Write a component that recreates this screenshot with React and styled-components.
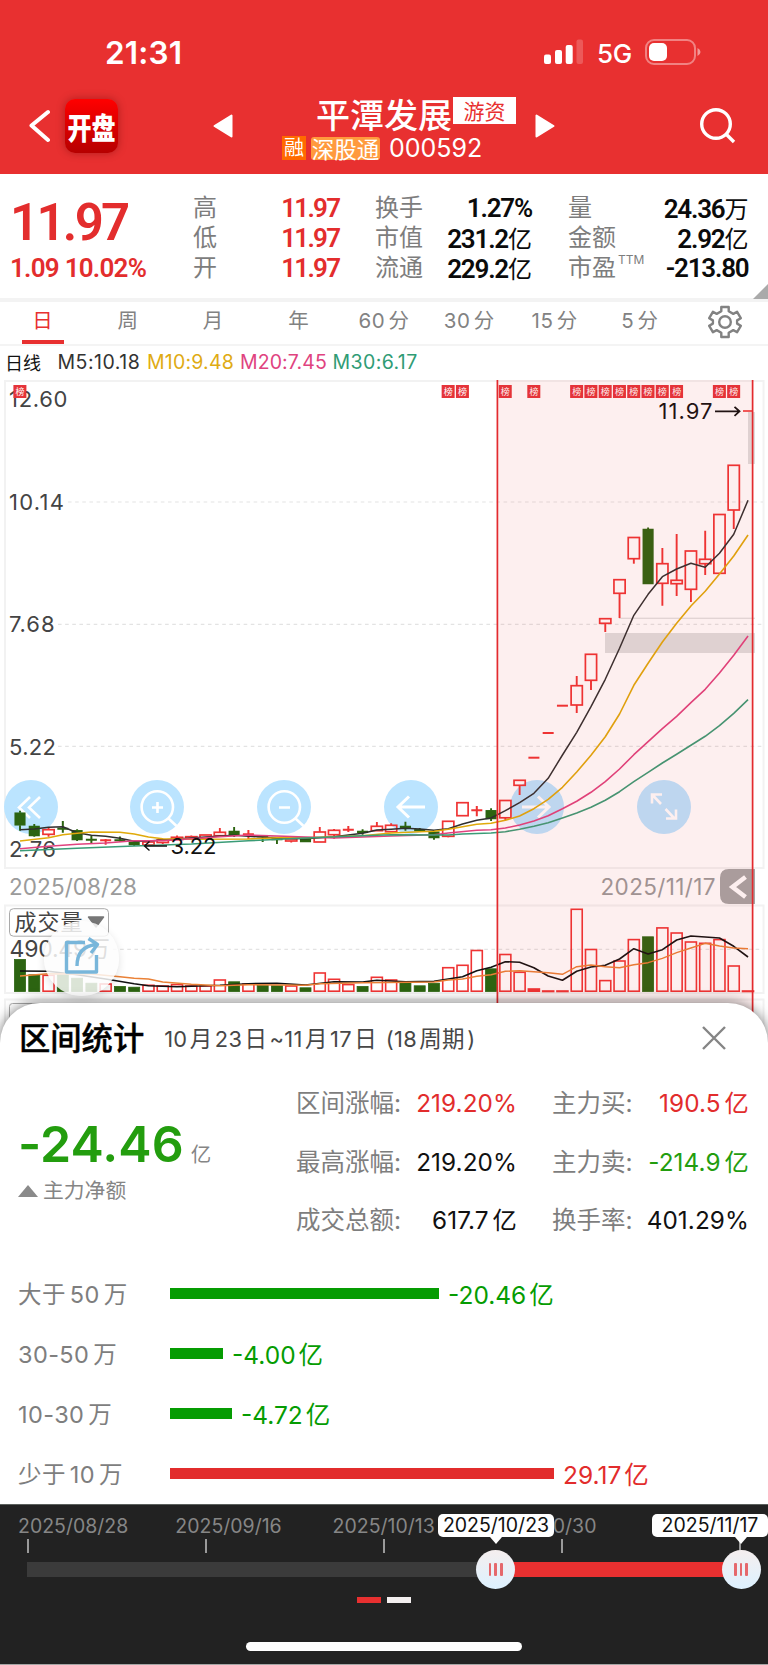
import React from "react";
import styled, { createGlobalStyle } from "styled-components";

const RED = "#e83030";
const GREEN = "#2c6411";
const LATIN = 'Inter, "Noto Sans CJK SC", sans-serif';
const DIN = 'Roboto, "Noto Sans CJK SC", sans-serif';

const Global = createGlobalStyle`
  * { box-sizing: border-box; }
  body { margin: 0; background: #fff; font-family: ${LATIN}; }
`;

const Page = styled.div`
  width: 768px;
  height: 1665px;
  overflow: hidden;
  display: flex;
  flex-direction: column;
  background: #fff;
  white-space: nowrap;
`;

/* ---------- header ---------- */
const Header = styled.header`
  height: 174px;
  flex: none;
  background: ${RED};
  color: #fff;
`;
const StatusBar = styled.div`
  height: 92px;
  padding: 12px 67px 0 105px;
  display: flex;
  align-items: center;
  justify-content: space-between;
`;
const Clock = styled.span`
  font-size: 31.5px;
  font-weight: 600;
  letter-spacing: 0.15px;
`;
const StatusIcons = styled.div`
  display: flex;
  align-items: center;
`;
const Network = styled.span`
  font-size: 26px;
  font-weight: 500;
  letter-spacing: -0.2px;
  margin: 2px 13px 0 13px;
`;
const NavBar = styled.div`
  height: 82px;
  display: flex;
  padding: 0 32px 0 28px;
`;
const NavSide = styled.div`
  display: flex;
  align-items: center;
  width: ${(p) => p.$w}px;
  height: 68px;
  svg { flex: none; }
  svg + svg { margin-left: auto; }
`;
const AppLogo = styled.div`
  width: 53px;
  height: 54px;
  margin-left: 15px;
  border-radius: 10px;
  background: linear-gradient(#ff0000, #b60000);
  box-shadow: 0 0 8px rgba(90, 0, 0, 0.4);
  display: flex;
  align-items: center;
  justify-content: center;
  span {
    font: 900 24px/30px "Noto Sans CJK SC", sans-serif;
    transform: scaleY(1.25);
  }
`;
const StockTitle = styled.div`
  flex: 1;
  display: flex;
  flex-direction: column;
  padding-left: 69px;
`;
const TitleLine = styled.div`
  height: 44px;
  display: flex;
  padding-left: 34px;
`;
const StockName = styled.span`
  font: 500 34px/43px "Noto Sans CJK SC", sans-serif;
`;
const StyleTag = styled.span`
  margin: 5px 0 0 1px;
  width: 63px;
  height: 27px;
  background: #fff;
  color: ${RED};
  font: 400 21px/26px "Noto Sans CJK SC", sans-serif;
  text-align: center;
`;
const CodeLine = styled.div`
  height: 24px;
  display: flex;
  align-items: center;
`;
const Badge = styled.span`
  height: ${(p) => (p.$wide ? 23 : 24)}px;
  width: ${(p) => (p.$wide ? 69 : 24)}px;
  margin-right: ${(p) => (p.$wide ? 9 : 5)}px;
  border-radius: ${(p) => (p.$wide ? 3 : 0)}px;
  background: ${(p) => (p.$wide ? "#ff9a3d" : "#ff6a00")};
  font: 400 ${(p) => (p.$wide ? 22.5 : 20)}px/22px "Noto Sans CJK SC", sans-serif;
  text-align: center;
`;
const Code = styled.span`
  font-size: 25px;
  line-height: 24px;
`;

/* ---------- quote ---------- */
const Quote = styled.section`
  height: 128px;
  flex: none;
  border-bottom: 4px solid #f3f3f3;
  display: flex;
  position: relative;
  padding: 19px 19.5px 0 10px;
`;
const PriceBlock = styled.div`
  width: 183px;
  color: #e32d2d;
  font-family: ${DIN};
  font-weight: 600;
`;
const Price = styled.div`
  font-size: 51px;
  line-height: 60px;
  letter-spacing: -2.7px;
`;
const Change = styled.div`
  font-size: 26px;
  line-height: 30px;
  letter-spacing: -0.75px;
`;
const StatGroup = styled.div`
  width: ${(p) => p.$w}px;
  margin-right: ${(p) => p.$gap}px;
`;
const Stat = styled.div`
  height: 30px;
  display: flex;
  justify-content: space-between;
  line-height: 30px;
`;
const StatLabel = styled.span`
  font-size: 24px;
  color: #7d7d7d;
  sup { font-size: 12px; line-height: 0; vertical-align: 12px; margin-left: 2px; }
`;
const StatValue = styled.span`
  font: 600 26px/30px ${DIN};
  letter-spacing: ${(p) => (p.$red ? -1.75 : -1.2)}px;
  margin-right: ${(p) => (p.$red ? -0.8 : 0)}px;
  color: ${(p) => (p.$red ? "#e32d2d" : "#0b0b0b")};
  i { font: 400 24px/30px "Noto Sans CJK SC", sans-serif; letter-spacing: 0; }
`;
const Corner = styled.div`
  position: absolute;
  right: 0;
  bottom: -1px;
  border-left: 15px solid transparent;
  border-bottom: 15px solid #aaa;
`;

/* ---------- tabs and legend ---------- */
const Tabs = styled.nav`
  height: 44px;
  flex: none;
  display: flex;
  border-bottom: 2px solid #f4f4f4;
`;
const Tab = styled.div`
  flex: 1;
  display: flex;
  justify-content: center;
  font-size: 20.5px;
  line-height: 38px;
  letter-spacing: 0.5px;
  word-spacing: -3px;
  color: ${(p) => (p.$on ? RED : "#828282")};
  span { height: 42px; width: ${(p) => (p.$on ? "42px" : "auto")}; text-align: center; border-bottom: ${(p) => (p.$on ? `4px solid ${RED}` : "0")}; }
  svg { margin-top: 3px; }
`;
const Legend = styled.div`
  height: 34px;
  flex: none;
  display: flex;
  align-items: center;
  padding: 0 0 2px 5px;
  font-size: 19.5px;
`;
const LegendItem = styled.span`
  color: ${(p) => p.$c};
  width: ${(p) => p.$w}px;
  font-size: ${(p) => p.$s || 19.5}px;
  letter-spacing: ${(p) => p.$ls || 0}px;
`;

/* ---------- chart ---------- */
const ChartArea = styled.section`
  height: 660px;
  flex: none;
  position: relative;
`;
const Layer = styled.svg`
  position: absolute;
  left: 0;
  top: 0;
  display: block;
  pointer-events: none;
  font-family: ${LATIN};
`;
const Controls = styled.div`
  position: absolute;
  left: 3.5px;
  top: 399.5px;
  display: flex;
  gap: 72.7px;
`;
const Control = styled.button`
  width: 54px;
  height: 54px;
  border: 0;
  padding: 0;
  border-radius: 50%;
  background: #bbe4ff;
  svg { display: block; }
`;
const ShareButton = styled.button`
  position: absolute;
  left: 44px;
  top: 541px;
  width: 75px;
  height: 75px;
  border: 0;
  padding: 0;
  border-radius: 50%;
  background: rgba(253, 253, 253, 0.84);
  box-shadow: 0 3px 8px rgba(0, 0, 0, 0.12);
  svg { display: block; }
`;

/* ---------- sheet ---------- */
const Sheet = styled.section`
  position: relative;
  flex: none;
  margin-top: -37px;
  height: 501px;
  border-radius: 40px 40px 0 0;
  background: #fff;
  box-shadow: 0 0 13px rgba(0, 0, 0, 0.55);
`;
const SheetHead = styled.div`
  height: 70px;
  display: flex;
  align-items: center;
  padding: 0 42px 2px 19px;
  svg { margin-left: auto; margin-top: 1px; }
`;
const SheetTitle = styled.h2`
  margin: 0 20px 0 0;
  font: 500 31.3px/40px "Noto Sans CJK SC", sans-serif;
  -webkit-text-stroke: 0.4px #000;
`;
const SheetRange = styled.span`
  font-size: 21.8px;
  letter-spacing: 0.3px;
  color: #474747;
  i { font-style: normal; font-size: 22.5px; padding: 0 2.3px; }
`;
const Summary = styled.div`
  height: 177px;
  display: flex;
  padding: 1px 19px 0 0;
`;
const NetBlock = styled.div`
  width: 296px;
  padding: 38px 0 0 18px;
`;
const NetValue = styled.div`
  font-size: 50px;
  font-weight: 600;
  line-height: 64px;
  letter-spacing: 0.1px;
  color: #239d0e;
  small { font-size: 20.5px; font-weight: 400; color: #858585; margin-left: 7px; }
`;
const NetLabel = styled.div`
  display: flex;
  align-items: center;
  gap: 5px;
  margin-top: -10px;
  font-size: 20.8px;
  line-height: 28px;
  color: #858585;
`;
const Metrics = styled.div`
  width: ${(p) => p.$w}px;
  margin-right: ${(p) => p.$gap}px;
`;
const Metric = styled.div`
  height: 58.7px;
  line-height: 58.7px;
  display: flex;
  justify-content: space-between;
  font-size: 24.5px;
  color: #7e7e7e;
  b { font-weight: 400; font-size: 24.3px; color: ${(p) => p.$c}; letter-spacing: 0.1px; word-spacing: -3px; }
`;
const Flows = styled.div`
  padding: 14px 0 0 18px;
`;
const Flow = styled.div`
  height: 60px;
  display: flex;
  align-items: center;
  font-size: 23.5px;
  color: #7e7e7e;
  > span { padding-bottom: 2px; }
`;
const FlowLabel = styled.span`
  width: 152px;
  word-spacing: -3px;
  letter-spacing: 0.4px;
`;
const FlowBar = styled.div`
  height: 11px;
  background: ${(p) => p.$c};
  margin-right: 9px;
  margin-top: -1px;
`;
const FlowValue = styled.span`
  font-size: 24.5px;
  word-spacing: -4px;
  color: ${(p) => p.$c};
`;

/* ---------- range slider ---------- */
const RangePanel = styled.footer`
  position: relative;
  height: 161px;
  flex: none;
  background: #222;
  border-top: 1px solid #5b605d;
  border-bottom: 1px solid #a5a5a5;
`;
const DateScale = styled.div`
  position: absolute;
  left: 18px;
  top: 9px;
  display: flex;
  color: #868686;
  font-size: 19.5px;
  line-height: 24px;
  span { width: 157.3px; }
`;
const Ticks = styled.div`
  position: absolute;
  left: 27px;
  top: 34px;
  width: 714px;
  display: flex;
  justify-content: space-between;
  i { width: 2px; height: 14px; background: #9a9a9a; }
`;
const Track = styled.div`
  position: absolute;
  left: 27px;
  top: 57px;
  width: 714px;
  height: 15px;
  background: #3b3b3b;
  display: flex;
  justify-content: flex-end;
  i { width: 245px; background: ${RED}; }
`;
const Handle = styled.div`
  position: absolute;
  left: ${(p) => p.$x - 19.5}px;
  top: 45px;
  width: 39px;
  height: 39px;
  border-radius: 50%;
  background: linear-gradient(#f5eeee, #ddf1ff);
  display: flex;
  align-items: center;
  justify-content: center;
  gap: 3px;
  i { width: 2.6px; height: 13px; border-radius: 1px; background: #e5686c; }
`;
const Tip = styled.div`
  position: absolute;
  left: ${(p) => p.$x}px;
  top: 9px;
  width: 116px;
  height: 23px;
  border-radius: 5px;
  background: #fff;
  color: #111;
  font-size: 19.5px;
  line-height: 23px;
  text-align: center;
  &::after {
    content: "";
    position: absolute;
    left: ${(p) => p.$arrow - 6}px;
    top: 23px;
    border: 6px solid transparent;
    border-top: 7px solid #fff;
    border-bottom: 0;
  }
`;
const Pager = styled.div`
  position: absolute;
  left: 357px;
  top: 92px;
  display: flex;
  gap: 6px;
  i { width: 24px; height: 6px; background: #f4f0f0; }
  i:first-child { background: ${RED}; }
`;
const HomeIndicator = styled.div`
  position: absolute;
  left: 246px;
  bottom: 13px;
  width: 276px;
  height: 9px;
  border-radius: 5px;
  background: #fff;
`;

/* ---------- data ---------- */
// [up, bodyTop, bodyBottom, high, low]
const candles = [
  [0, 812.7, 825.3, 810.7, 830.7], [0, 826, 836, 824, 836.7], [1, 829.7, 834.3, 827, 836.7],
  [0, 828, 829.5, 821, 832.7], [0, 830.3, 840, 829.3, 841], [0, 839, 840.5, 836, 843],
  [1, 839.5, 841, 839, 844.7], [0, 839.5, 841, 836.5, 841.7], [0, 841.7, 845, 841, 846],
  [1, 842, 845, 842, 845], [1, 840, 842.5, 838.7, 844], [1, 837.3, 839.5, 835.5, 840],
  [1, 836.7, 838.7, 835.5, 839], [1, 835, 838.5, 835, 838.5], [1, 832.3, 835.7, 828, 836],
  [0, 831, 835.3, 827, 837], [1, 833.7, 835, 830, 839], [0, 835.5, 837, 835, 842],
  [0, 837, 840, 837, 844], [1, 839, 841, 837, 842.5], [0, 839, 842, 838, 842],
  [1, 832, 842, 827, 842], [1, 830.3, 834.7, 829, 838.7], [1, 829, 830.3, 826, 832],
  [0, 831, 832.7, 829.3, 834.7], [1, 826.3, 830.7, 822, 831], [1, 825.3, 831.7, 823.3, 832],
  [0, 826, 828.3, 821.7, 830.7], [0, 829.3, 831, 828, 832], [0, 831.7, 838, 831, 839.7],
  [1, 821.3, 836.3, 821.3, 837.3], [1, 802.7, 815.7, 802.7, 815.7], [1, 809.5, 811, 806, 816.3],
  [0, 810.3, 819, 808.3, 821], [1, 800.5, 817.8, 800.5, 820], [1, 780.3, 785.3, 780, 795],
  [1, 757.7, 757.7, 757.7, 757.7], [1, 733, 733, 733, 733], [1, 705.7, 705.7, 705.7, 705.7],
  [1, 685.7, 705, 676, 713], [1, 654.3, 680.3, 654.3, 690], [1, 618.7, 623.3, 618.7, 632],
  [1, 579.7, 593.3, 579.7, 618], [1, 537.5, 558.7, 537.5, 563.7], [0, 529, 584, 527.5, 584],
  [1, 563.7, 583.3, 548, 605.7], [1, 580.3, 583.7, 534, 596], [1, 551, 589.3, 551, 602],
  [1, 559.3, 563.7, 530.7, 575], [1, 514.5, 573.3, 514.5, 573.3], [1, 465.3, 510, 465.3, 529],
];
const volumes = [
  959, 974.3, 975.3, 974.3, 977.7, 982.7, 984, 986, 986.7, 985.3, 986, 984.6, 986, 986, 980, 981.3, 984, 985,
  985.3, 986, 987.3, 973, 979.3, 984.6, 986, 977.3, 980, 981.3, 985.3, 982.7, 967.7, 965.3, 950.5, 968.3,
  954.5, 972.3, 989, 991, 991, 909.3, 949.5, 980.6, 961, 939.6, 936.3, 927.9, 933, 942, 943.3, 939.6, 966, 991,
];
const x = (i) => 20 + i * 14.275;
const ma5 = [[0,829.7],[1,829],[2,827.3],[3,826.7],[4,832.7],[5,835.3],[6,836.3],[7,838.3],[8,841.3],[9,841],[10,840],[13,837],[15,835.3],[18,838],[20,838.7],[22,836.7],[24,833.3],[25,830],[26,829.3],[27,828.3],[28,829],[29,830.3],[30,828.7],[31,824],[32,820.3],[33,818],[34,810.7],[35,802.7],[36,793.3],[37,778.3],[38,755],[39,732.3],[40,706.7],[41,679.3],[42,648.3],[43,615.3],[44,594.3],[45,576.7],[46,569],[47,563.3],[48,567.3],[49,553.3],[50,534.3],[51,500.3]];
const ma10 = [[0,841],[2,837.7],[3,834.7],[4,833.3],[5,832],[7,832.3],[8,834],[9,837],[10,838.7],[12,839.3],[16,839],[18,837.7],[20,837.7],[24,835.7],[26,833],[28,831.7],[29,831.3],[30,829.3],[31,826.7],[32,824.3],[33,823.3],[34,820.3],[35,816],[36,808.7],[37,799.3],[38,787.3],[39,772],[40,755.3],[41,736.7],[42,714],[43,685.3],[44,663.3],[45,642],[46,623.3],[47,606],[48,591.3],[49,574],[50,556],[51,535]];
const ma20 = [[0,848.7],[2,846.3],[4,844.3],[6,843],[8,840.7],[10,840.7],[12,838.7],[14,836.7],[16,835],[18,836],[20,837],[22,838],[26,836],[29,834.7],[30,833],[32,830.3],[33,829.7],[34,828],[35,825],[36,821],[37,815.7],[38,808.7],[39,801.3],[40,792.3],[41,781.7],[42,769],[43,754.7],[44,741.7],[45,728.7],[46,716.3],[47,702.7],[48,689.3],[49,673],[50,655.3],[51,636]];
const ma30 = [[0,850.7],[4,848.3],[8,846],[12,844],[16,840.7],[20,838],[24,835.7],[26,834.7],[30,835],[31,834],[33,833],[34,831.7],[35,829.3],[36,826.3],[37,822.7],[38,818],[39,813],[40,807.3],[41,800.3],[42,791.7],[43,781.7],[44,772.3],[45,763],[46,754.3],[47,745.3],[48,736.3],[49,725.7],[50,713.3],[51,699.7]];
const vol5 = [[0,971],[2,971.3],[4,974.7],[6,979],[8,983.7],[9,985.7],[11,986.7],[14,985.3],[16,983.7],[18,983.3],[20,985],[22,981.7],[24,982],[25,980.3],[26,981],[27,981.7],[29,981.3],[31,976.7],[32,970.7],[33,967.3],[34,961.7],[35,962.3],[36,967.7],[37,976],[38,980.3],[39,971.3],[40,967],[41,965.3],[42,959],[43,948.7],[44,954],[45,949.7],[46,940],[47,936],[49,938],[50,946.3],[51,957]];
const vol10 = [[0,976],[2,973.7],[5,974],[7,976.7],[8,978.3],[9,979],[10,982],[12,984.3],[14,985.7],[16,984.7],[20,985.3],[21,983.7],[24,982.7],[29,982],[30,980],[31,979],[32,976.3],[33,974.7],[34,971.3],[35,970.7],[37,972.7],[38,974.3],[39,966.7],[40,965],[41,966.7],[42,967.7],[43,964.7],[44,962.7],[45,958.3],[46,952.7],[47,948],[48,943.3],[49,946],[50,948],[51,948.7]];
const marks = [0, 30, 31, 34, 36, 39, 40, 41, 42, 43, 44, 45, 46, 49, 50];

const Line = ({ pts, c, w = 1.6 }) => (
  <polyline points={pts.map(([i, y]) => `${x(i)},${y}`).join(" ")} fill="none" stroke={c} strokeWidth={w} strokeLinejoin="round" />
);
const Txt = ({ at, w, s = 22, c = "#444", children }) => (
  <text x={at[0]} y={at[1]} fontSize={s} fill={c} textLength={w} lengthAdjust="spacing">{children}</text>
);

const BackDrop = () => (
  <Layer width="768" height="660" viewBox="0 380 768 660">
    <g fill="none" stroke="#f2f2f2" strokeWidth="2">
      <rect x="5" y="381" width="758.5" height="487" />
      <rect x="5" y="905.5" width="758.5" height="87.5" />
      <rect x="5" y="999.5" width="758.5" height="60" />
    </g>
    <g stroke="#e3e3e3" strokeWidth="1.2" strokeDasharray="3.6 3.54">
      <path d="M68 502H763M58 624.3H763M58 746.3H763M113 949.3H763" />
    </g>
    <rect x="9.5" y="1003.5" width="98" height="30" rx="3" fill="none" stroke="#aaa" />
    <Txt at={[9, 407]} w={58.5}>12.60</Txt>
    <Txt at={[9, 510]} w={55}>10.14</Txt>
    <Txt at={[9, 632]} w={45.5}>7.68</Txt>
    <Txt at={[9, 755]} w={47}>5.22</Txt>
    <Txt at={[9, 857.3]} w={47}>2.76</Txt>
    <Txt at={[9, 895]} w={128} s={22.5} c="#9b9b9b">2025/08/28</Txt>
    <Txt at={[600.5, 895]} w={115} s={22.5} c="#9b9b9b">2025/11/17</Txt>
    <rect x="9.5" y="908.7" width="99" height="27.5" rx="4" fill="#fff" stroke="#aaa" />
    <Txt at={[14.5, 930]} w={68} s={22}>成交量</Txt>
    <path d="M88.5 917h15l-7.5 10z" fill="#777" stroke="#777" strokeWidth="1.5" strokeLinejoin="round" />
    <Txt at={[9.5, 957.3]} w={100.5} s={23}>490.49万</Txt>
  </Layer>
);

const Plot = () => (
  <Layer width="768" height="660" viewBox="0 380 768 660">
    <path d="M729 869H755V904H729Q720 904 720 895V878Q720 869 729 869Z" fill="#a5a5a5" />
    <path d="M745.5 877l-13 10 13 10" fill="none" stroke="#fff" strokeWidth="4.6" />
    <g fill="#aaa" fillOpacity=".38">
      <rect x="605" y="633" width="150" height="20" />
      <rect x="619" y="617.7" width="136" height="1.2" />
      <rect x="748" y="412" width="7" height="52" />
    </g>
    {candles.map(([up, t, b, h, l], i) => {
      const flat = b - t < 1.6;
      const c = up ? "#ef3434" : GREEN;
      return (
        <g key={i} stroke={c} strokeWidth="1.7" fill={up ? "none" : c}>
          {flat ? (
            <path d={`M${x(i) - 5.5} ${(t + b) / 2}h11M${x(i)} ${h}V${l}`} strokeWidth="2" />
          ) : (
            <>
              <path d={`M${x(i)} ${h}V${t}M${x(i)} ${b}V${l}`} strokeWidth="1.9" />
              <rect x={x(i) - (up ? 5.6 : 4.7)} y={t + (up ? 0 : 0.6)} width={up ? 11.2 : 9.4} height={Math.max(b - t - (up ? 0 : 1.2), 0.6)} />
            </>
          )}
        </g>
      );
    })}
    <path d="M743 411H753" stroke="#ef3434" strokeWidth="1.6" />
    <Line pts={ma5} c="#2f2f2f" w={1.5} />
    <Line pts={ma10} c="#e0aa0b" />
    <Line pts={ma20} c="#e0437f" />
    <Line pts={ma30} c="#3a9c77" />
    {volumes.map((t, i) => {
      const up = i === 51 || candles[i][0];
      return (
        <rect key={i} x={x(i) - 5.5} y={up ? t : t + 0.5} width="11" height={Math.max((up ? 991.2 : 991) - t, 0.5)}
          fill={up ? (i === 36 ? "#ef3434" : "#fff") : GREEN} fillOpacity={up && i !== 36 ? 0 : 1} stroke={up ? "#ef3434" : GREEN} strokeWidth={up ? 1.6 : 0.8} />
      );
    })}
    <Line pts={vol5} c="#111" />
    <Line pts={vol10} c="#ea8136" w={1.4} />
    <Txt at={[170.5, 854]} w={46} c="#111">3.22</Txt>
    <path d="M167 846H145M149.5 841.5l-5 4.5 5 4.5" fill="none" stroke="#111" strokeWidth="1.4" />
    <Txt at={[658.5, 419]} w={54} c="#111">11.97</Txt>
    <path d="M715 411.3H739M734.5 406.8l5 4.5-5 4.5" fill="none" stroke="#111" strokeWidth="1.8" />
    {marks.map((i) => (
      <g key={i}>
        <rect x={x(i) - 6.6} y="385" width="13" height="13" fill="#e5343a" />
        <text x={x(i)} y="395" fontSize="9" fill="#fff" textAnchor="middle">榜</text>
      </g>
    ))}
    <rect x="497" y="380" width="256" height="660" fill={RED} fillOpacity=".08" />
    <path d="M497.4 380V1040M752.6 380V1040" stroke="#e32a2e" strokeWidth="1.7" />
  </Layer>
);

const icons = [
  <path d="M36 17L22 29l14 12M26 17M27 17l-12 12 12 12" transform="translate(3 -1.5)" />,
  <><circle cx="27.3" cy="27" r="15.7" /><path d="M38.5 38.5l8 7.5M27.5 22v11M22 27.5h11" /></>,
  <><circle cx="27.3" cy="27" r="15.7" /><path d="M38.5 38.5l8 7.5M22 27.5h11" /></>,
  <path d="M41 27H14M25 16.5L14 27l11 10.5" strokeWidth="3" />,
  <path d="M12 27h27M28 16.5L39 27 28 37.5" strokeWidth="3" />,
  <path d="M16 15.5L24 24M28.5 29L37 38M15 23.5V14.500h10M29 38.500h10V29.500" />,
];
const doubleChevron = <path d="M26 17L15 27.5 26 38M36 17L25 27.5 36 38" />;
icons[0] = doubleChevron;

const stats = [
  { w: 145.5, gap: 36.5, red: 1, rows: [["高", "11.97"], ["低", "11.97"], ["开", "11.97"]] },
  { w: 157, gap: 36, rows: [["换手", "1.27%"], ["市值", "231.2", "亿"], ["流通", "229.2", "亿"]] },
  { w: 180.5, gap: 0, rows: [["量", "24.36", "万"], ["金额", "2.92", "亿"], ["市盈", "-213.80"]] },
];
const flows = [
  ["大于 50 万", 269, "#059c02", "-20.46 亿"],
  ["30-50 万", 53, "#059c02", "-4.00 亿"],
  ["10-30 万", 62, "#059c02", "-4.72 亿"],
  ["少于 10 万", 384, "#e22c2c", "29.17 亿"],
];

export default function App() {
  return (
    <Page>
      <Global />
      <Header>
        <StatusBar>
          <Clock>21:31</Clock>
          <StatusIcons>
            <svg width="40" height="26" viewBox="0 0 40 26" fill="#fff">
              <rect x="0" y="15.5" width="7" height="9.5" rx="2" />
              <rect x="11" y="11" width="7" height="14" rx="2" />
              <rect x="21.7" y="6" width="7" height="19" rx="2" />
              <rect x="32.5" y="0.5" width="6.5" height="24.5" rx="2" opacity=".2" />
            </svg>
            <Network>5G</Network>
            <svg width="56" height="26" viewBox="0 0 56 26">
              <rect x="1" y="1" width="49" height="24" rx="8" fill="none" stroke="#fff" strokeOpacity=".4" strokeWidth="2" />
              <rect x="4" y="4" width="18" height="18" rx="5" fill="#fff" />
              <path d="M52.5 9q3 1.500 3 4t-3 4z" fill="#fff" opacity=".5" />
            </svg>
          </StatusIcons>
        </StatusBar>
        <NavBar>
          <NavSide $w={185}>
            <svg width="22" height="34" viewBox="0 0 22 34" fill="none" stroke="#fff" strokeWidth="4" strokeLinecap="round" strokeLinejoin="round">
              <path d="M20 3L3.500 16.500 20 31" />
            </svg>
            <AppLogo><span>开盘</span></AppLogo>
          </NavSide>
          <NavSide $w={0}>
            <svg width="21" height="24" viewBox="0 0 21 24"><path d="M1.500 12L18.500 1.500v21z" fill="#fff" stroke="#fff" strokeWidth="2" strokeLinejoin="round" /></svg>
          </NavSide>
          <StockTitle>
            <TitleLine><StockName>平潭发展</StockName><StyleTag>游资</StyleTag></TitleLine>
            <CodeLine><Badge>融</Badge><Badge $wide>深股通</Badge><Code>000592</Code></CodeLine>
          </StockTitle>
          <NavSide $w={202}>
            <svg width="21" height="24" viewBox="0 0 21 24"><path d="M19.500 12L2.500 1.500v21z" fill="#fff" stroke="#fff" strokeWidth="2" strokeLinejoin="round" /></svg>
            <svg width="36" height="36" viewBox="0 0 36 36" fill="none" stroke="#fff" strokeWidth="3.4">
              <circle cx="16" cy="16" r="14.300" /><path d="M26 26l8 8" />
            </svg>
          </NavSide>
        </NavBar>
      </Header>

      <Quote>
        <PriceBlock>
          <Price>11.97</Price>
          <Change>1.09 10.02%</Change>
        </PriceBlock>
        {stats.map((g, i) => (
          <StatGroup key={i} $w={g.w} $gap={g.gap}>
            {g.rows.map(([l, v, u]) => (
              <Stat key={l}>
                <StatLabel>{l}{l === "市盈" && <sup>TTM</sup>}</StatLabel>
                <StatValue $red={g.red}>{v}{u && <i>{u}</i>}</StatValue>
              </Stat>
            ))}
          </StatGroup>
        ))}
        <Corner />
      </Quote>

      <Tabs>
        {["日", "周", "月", "年", "60 分", "30 分", "15 分", "5 分"].map((t, i) => (
          <Tab key={t} $on={i === 0}><span>{t}</span></Tab>
        ))}
        <Tab>
          <svg width="34" height="34" viewBox="0 0 34 34" fill="none" stroke="#828282" strokeWidth="2.4" strokeLinejoin="round">
            <circle cx="17" cy="17" r="5.800" />
            <path d="M13.300 2h7.400v4.300l4.600 2.600 3.800-2.100 3.700 6.400-3.700 2.200v3.200l3.700 2.200-3.700 6.400-3.800-2.100-4.600 2.600V32h-7.400v-4.300l-4.600-2.600-3.800 2.100-3.700-6.400 3.700-2.200v-3.200l-3.700-2.200 3.700-6.400 3.800 2.100 4.600-2.600z" />
          </svg>
        </Tab>
      </Tabs>
      <Legend>
        <LegendItem $c="#111" $w={52.5} $s={18}>日线</LegendItem>
        <LegendItem $c="#333" $w={89.5} $ls={0.5}>M5:10.18</LegendItem>
        <LegendItem $c="#dfab14" $w={93} $ls={0.2}>M10:9.48</LegendItem>
        <LegendItem $c="#e0437f" $w={92.5} $ls={0.1}>M20:7.45</LegendItem>
        <LegendItem $c="#2f9c75" $w={90} $ls={0.4}>M30:6.17</LegendItem>
      </Legend>

      <ChartArea>
        <BackDrop />
        <Controls>
          {icons.map((icon, i) => (
            <Control key={i}>
              <svg width="54" height="54" viewBox="0 0 54 54" fill="none" stroke="#fff" strokeWidth="2.6">{icon}</svg>
            </Control>
          ))}
        </Controls>
        <Plot />
        <ShareButton>
          <svg width="75" height="75" viewBox="0 0 75 75" fill="none" stroke="#78b6da" strokeWidth="3.4" strokeLinejoin="round">
            <path d="M41 21.500H22.500V51h30V34" />
            <path d="M33 45c0-12 6-20 19-21.500M44.500 17.500l9 6-6.500 8.500" />
          </svg>
        </ShareButton>
      </ChartArea>

      <Sheet>
        <SheetHead>
          <SheetTitle>区间统计</SheetTitle>
          <SheetRange>10<i>月</i>23<i>日</i>~11<i>月</i>17<i>日</i> (18<i>周期</i>)</SheetRange>
          <svg width="24" height="24" viewBox="0 0 24 24" stroke="#858585" strokeWidth="2.400"><path d="M1 1l22 22M23 1L1 23" /></svg>
        </SheetHead>
        <Summary>
          <NetBlock>
            <NetValue>-24.46<small>亿</small></NetValue>
            <NetLabel>
              <svg width="20" height="12" viewBox="0 0 20 12"><path d="M0 12L10 0l10 12z" fill="#8a8a8a" /></svg>
              主力净额
            </NetLabel>
          </NetBlock>
          <Metrics $w={221} $gap={35}>
            <Metric $c="#e22c2c">区间涨幅:<b>219.20%</b></Metric>
            <Metric $c="#111">最高涨幅:<b>219.20%</b></Metric>
            <Metric $c="#111">成交总额:<b>617.7 亿</b></Metric>
          </Metrics>
          <Metrics $w={197} $gap={0}>
            <Metric $c="#e22c2c">主力买:<b>190.5 亿</b></Metric>
            <Metric $c="#239d0e">主力卖:<b>-214.9 亿</b></Metric>
            <Metric $c="#111">换手率:<b>401.29%</b></Metric>
          </Metrics>
        </Summary>
        <Flows>
          {flows.map(([label, w, c, v]) => (
            <Flow key={label}>
              <FlowLabel>{label}</FlowLabel>
              <FlowBar $c={c} style={{ width: w }} />
              <FlowValue $c={c}>{v}</FlowValue>
            </Flow>
          ))}
        </Flows>
      </Sheet>

      <RangePanel>
        <DateScale>
          <span>2025/08/28</span><span>2025/09/16</span><span>2025/10/13</span><span>2025/10/30</span>
        </DateScale>
        <Ticks><i /><i /><i /><i /><i /></Ticks>
        <Track><i /></Track>
        <Tip $x={438} $arrow={58}>2025/10/23</Tip>
        <Tip $x={652} $arrow={89}>2025/11/17</Tip>
        <Handle $x={495.7}><i /><i /><i /></Handle>
        <Handle $x={741}><i /><i /><i /></Handle>
        <Pager><i /><i /></Pager>
        <HomeIndicator />
      </RangePanel>
    </Page>
  );
}
